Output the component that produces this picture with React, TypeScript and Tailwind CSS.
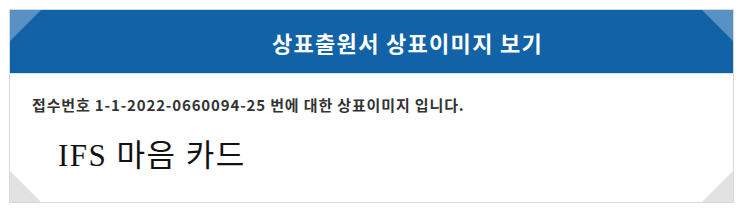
import React from "react";

export default function App() {
  return (
    <div className="w-[743px] h-[211px] bg-white pt-[9px] pl-[9px]">
      <div className="relative w-[725px] h-[194px] border border-[#d9d9d9] bg-white">
        <div className="h-[64px] bg-[#1262a8] border-b border-[#d6e4f0] flex items-center pl-[262px]">
          <span
            className="text-white font-bold text-[22px] tracking-[1.3px] leading-[30px]"
            style={{ fontFamily: '"Noto Sans CJK KR", "Noto Sans", sans-serif' }}
          >
            상표출원서 상표이미지 보기
          </span>
        </div>
        <div className="pl-[22px] pt-[21px]">
          <p
            className="text-[15px] font-bold text-[#333333] leading-[20px] tracking-[0.85px]"
            style={{ fontFamily: '"Noto Sans CJK KR", "Noto Sans", sans-serif' }}
          >
            접수번호 1-1-2022-0660094-25 번에 대한 상표이미지 입니다.
          </p>
          <p
            className="pl-[26px] mt-[24px] text-[31px] text-[#111] leading-[34px] tracking-[1.5px]"
            style={{ fontFamily: '"Liberation Serif", "Noto Sans CJK KR", serif' }}
          >
            IFS 마음 카드
          </p>
        </div>
        <svg className="absolute left-0 top-0" width="31" height="31" viewBox="0 0 31 31">
          <polygon points="0,0 31,0 0,31" fill="#ffffff" fillOpacity="0.3" />
        </svg>
        <svg className="absolute right-0 top-0" width="31" height="31" viewBox="0 0 31 31">
          <polygon points="0,0 31,0 31,31" fill="#ffffff" fillOpacity="0.3" />
        </svg>
        <svg className="absolute left-0 bottom-0" width="31" height="31" viewBox="0 0 31 31">
          <polygon points="0,0 31,31 0,31" fill="#e2e2e2" />
        </svg>
        <svg className="absolute right-0 bottom-0" width="31" height="31" viewBox="0 0 31 31">
          <polygon points="31,0 31,31 0,31" fill="#e2e2e2" />
        </svg>
      </div>
    </div>
  );
}
